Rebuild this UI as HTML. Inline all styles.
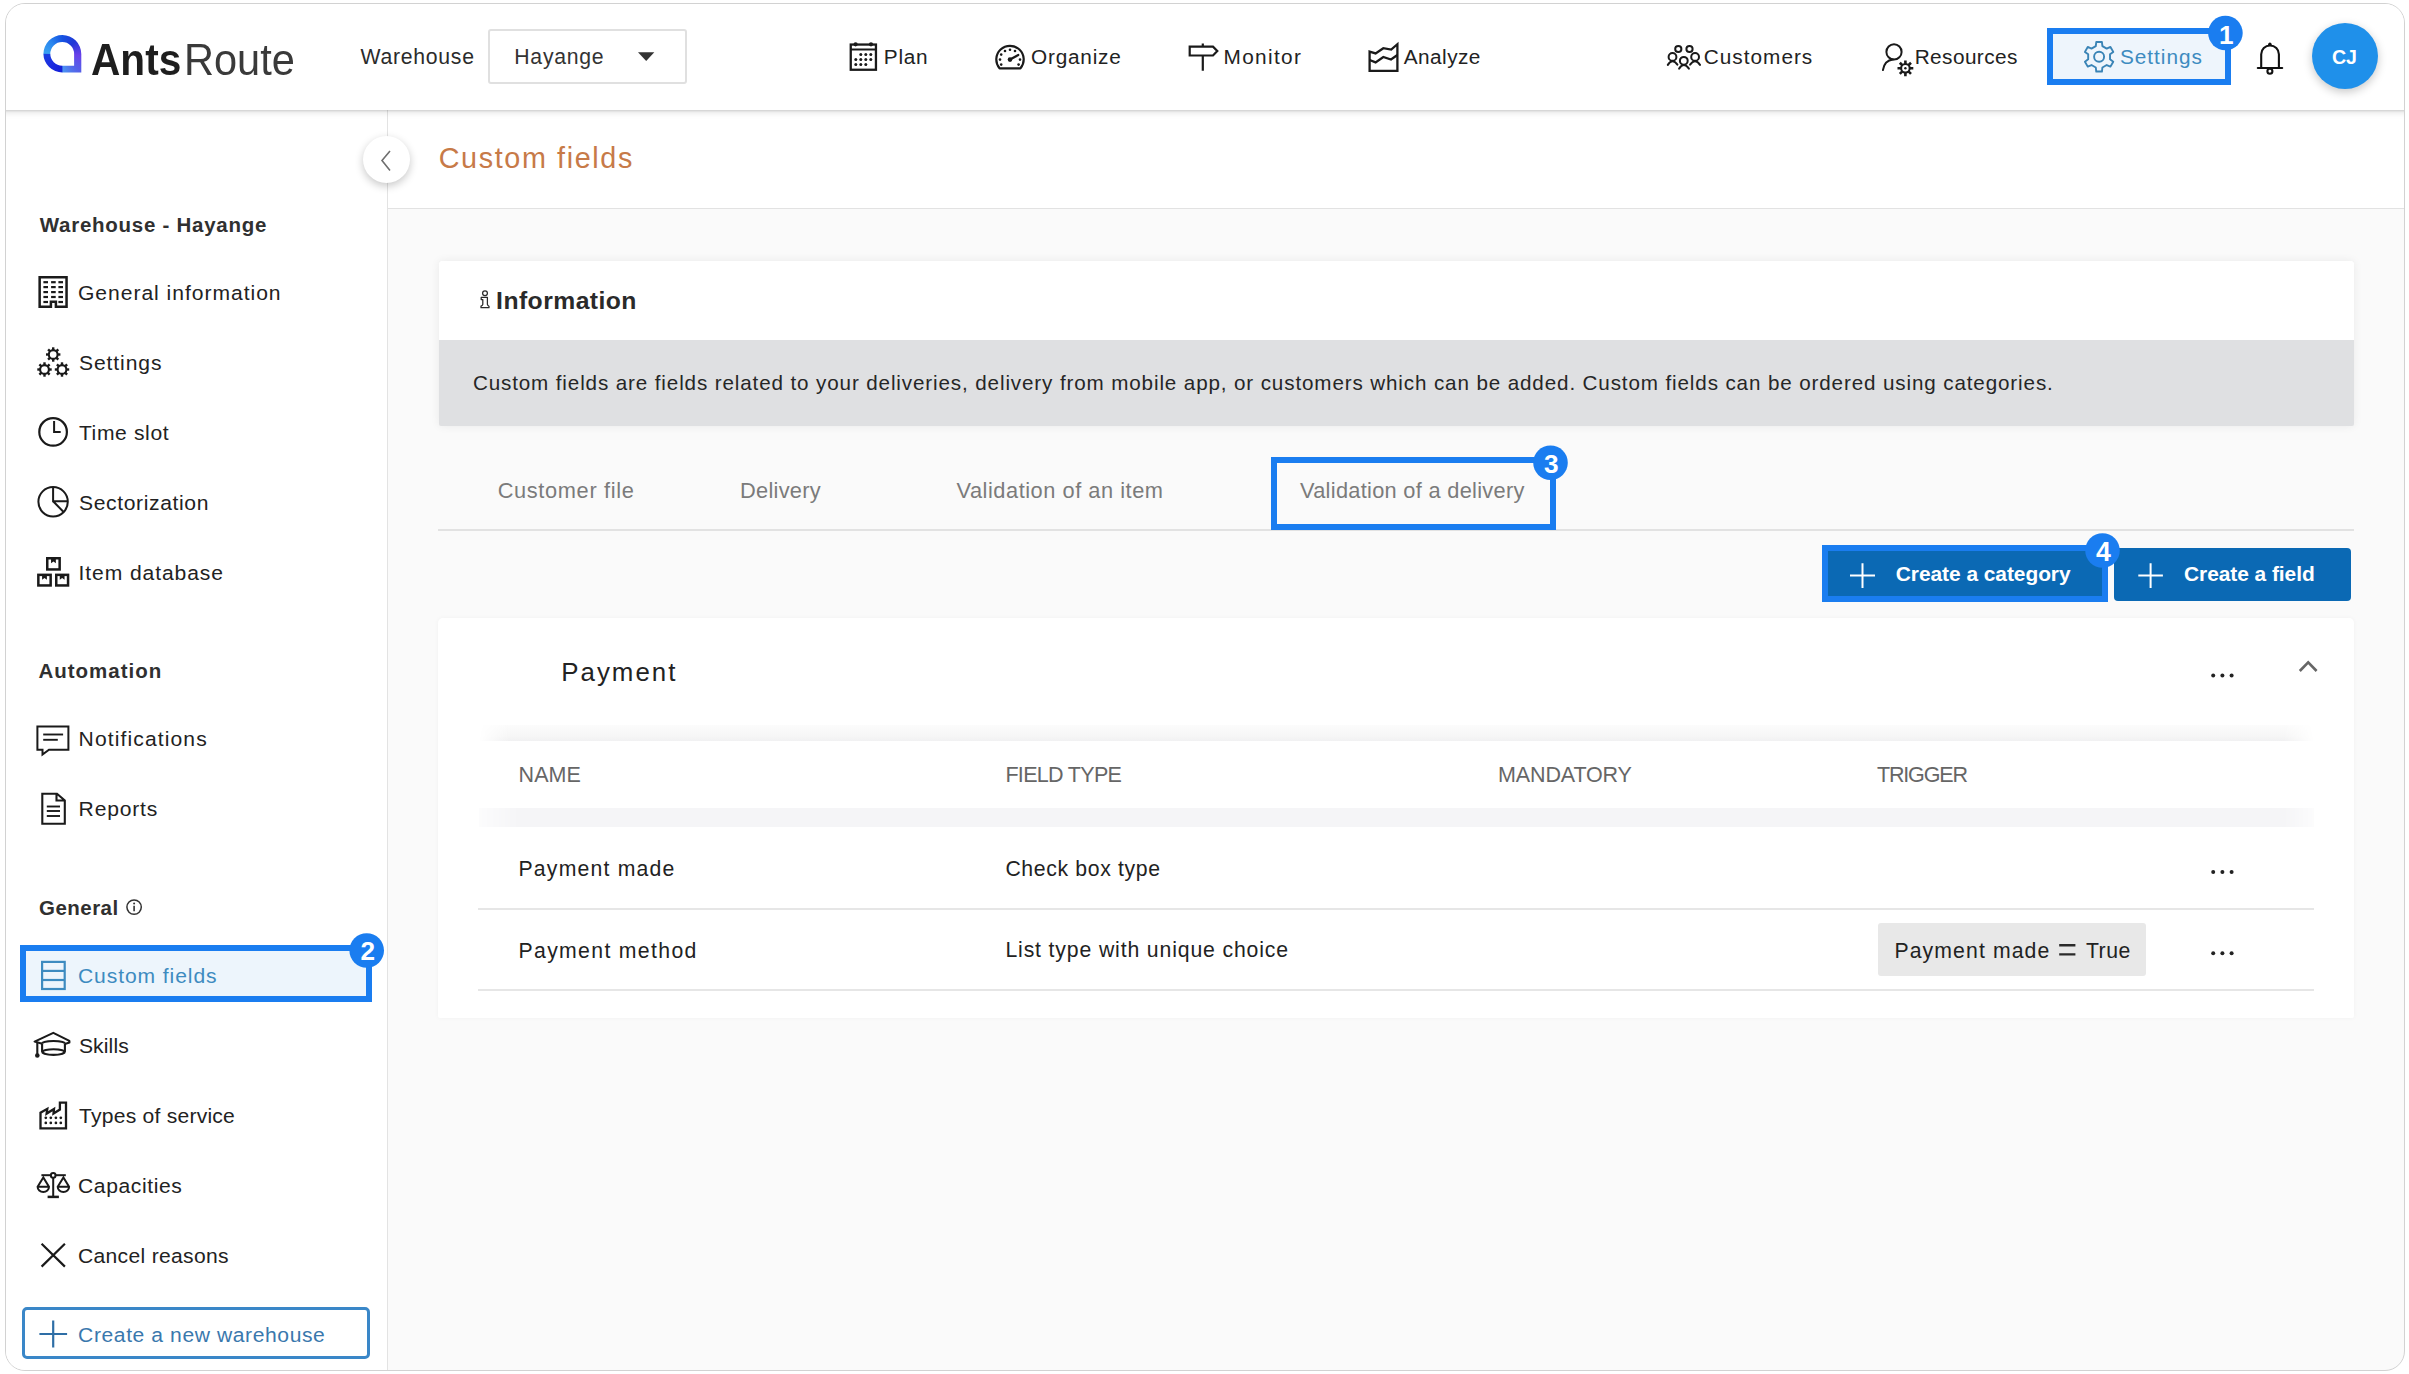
<!DOCTYPE html>
<html><head><meta charset="utf-8"><style>
html,body{margin:0;padding:0;background:#fff;width:2409px;height:1374px;overflow:hidden;font-family:"Liberation Sans",sans-serif;}
#frame{position:absolute;left:5px;top:3px;width:2398px;height:1366px;border:1px solid #d2d2d2;border-radius:20px;overflow:hidden;background:#fafafa;}
#in{position:absolute;left:-6px;top:-4px;width:2409px;height:1374px;}
.a{position:absolute;box-sizing:border-box;}
.t{position:absolute;white-space:nowrap;line-height:1;z-index:6;}
svg{position:absolute;overflow:visible;z-index:5;}

</style></head><body>
<div id="frame"><div id="in">
<!-- sidebar -->
<div class="a" style="left:0;top:110px;width:388px;height:1270px;background:#fff;border-right:1px solid #e3e3e3;"></div>
<!-- title bar -->
<div class="a" style="left:388px;top:110px;width:2030px;height:99px;background:#fff;border-bottom:1px solid #e2e2e2;"></div>
<!-- header -->
<div class="a" style="left:0;top:0;width:2409px;height:110px;background:#fff;box-shadow:0 1px 2px rgba(0,0,0,0.12),0 3px 6px rgba(0,0,0,0.10);z-index:2;"></div>
<!-- collapse button -->
<div class="a" style="left:363px;top:136px;width:47px;height:47px;border-radius:50%;background:#fff;box-shadow:0 3px 8px rgba(0,0,0,0.22);"></div>
<!-- info card -->
<div class="a" style="left:439px;top:261px;width:1915px;height:165px;background:#dfe0e2;box-shadow:0 0 10px rgba(0,0,0,0.07);border-radius:2px;"></div>
<div class="a" style="left:439px;top:261px;width:1915px;height:79px;background:#fff;border-radius:2px 2px 0 0;"></div>
<!-- tabs underline -->
<div class="a" style="left:438px;top:529px;width:1916px;height:2px;background:#e2e2e2;"></div>
<!-- payment card -->
<div class="a" style="left:438px;top:618px;width:1916px;height:400px;background:#fff;border-radius:5px 5px 2px 2px;box-shadow:0 0 5px rgba(0,0,0,0.04);"></div>
<div class="a" style="left:479px;top:725px;width:1835px;height:16px;background:linear-gradient(#fcfcfc,#f6f6f6 70%,#f1f1f2);-webkit-mask-image:linear-gradient(to right,transparent,#000 30px,#000 calc(100% - 30px),transparent);"></div>
<div class="a" style="left:479px;top:808px;width:1835px;height:19px;background:#f5f5f7;-webkit-mask-image:linear-gradient(to right,rgba(0,0,0,.3),#000 40px,#000 calc(100% - 30px),rgba(0,0,0,.3));"></div>
<div class="a" style="left:478px;top:908px;width:1836px;height:2px;background:#e6e6e6;"></div>
<div class="a" style="left:478px;top:989px;width:1836px;height:2px;background:#e6e6e6;"></div>
<!-- chip -->
<div class="a" style="left:1878px;top:923px;width:268px;height:53px;background:#e8e8e8;border-radius:3px;"></div>
<!-- buttons -->
<div class="a" style="left:1822px;top:545px;width:286px;height:57px;background:#0b69b4;border:6px solid #1a7df0;"></div>
<div class="a" style="left:2114px;top:548px;width:237px;height:53px;background:#0b69b4;border-radius:4px;"></div>
<!-- highlight boxes -->
<div class="a" style="left:2047px;top:28px;width:184px;height:57px;background:#eef5fc;border:6px solid #1a7df0;z-index:3;"></div>
<div class="a" style="left:1271px;top:457px;width:285px;height:73px;border:6px solid #1a7df0;"></div>
<div class="a" style="left:20px;top:945px;width:352px;height:57px;background:#edf5fc;border:6px solid #1a7df0;"></div>
<!-- create warehouse btn -->
<div class="a" style="left:22px;top:1307px;width:348px;height:52px;border:3px solid #3a87c8;border-radius:5px;"></div>
<!-- dropdown -->
<div class="a" style="left:488px;top:29px;width:199px;height:55px;border:2px solid #e0e0e0;border-radius:3px;z-index:3;"></div>
<!-- avatar -->
<div class="a" style="left:2312px;top:23px;width:66px;height:66px;border-radius:50%;background:#1f90ea;box-shadow:0 3px 10px rgba(0,0,0,0.22);z-index:3;"></div>
<div class="a" style="left:43px;top:35px;width:39px;height:38px;z-index:5;background:conic-gradient(from 0deg at 19.4px 18.9px,#1552e2 0deg,#2238d6 45deg,#6a40ea 95deg,#5560e8 135deg,#4a94f2 178deg,#1420d8 182deg,#1c2ce0 225deg,#1a3ee0 268deg,#3aa2f2 272deg,#2a86ee 315deg,#1552e2 360deg);clip-path:path(evenodd,'M0.4 18.9 A19 19 0 0 1 19.4 0 A19 19 0 0 1 38.3 18.9 L38.3 37.5 L19.4 37.5 A19 19 0 0 1 0.4 18.9 Z M7.3 18.8 A11.9 11.9 0 0 0 19.2 30.7 L31.1 30.7 L31.1 18.8 A11.9 11.9 0 0 0 19.2 6.9 A11.9 11.9 0 0 0 7.3 18.8 Z');"></div><svg style="left:0;top:0" width="2409" height="1374" viewBox="0 0 2409 1374"><path d="M638 52.3 L654.3 52.3 L646.2 61 Z" fill="#333"/>
<g transform="translate(845 38)" fill="none" stroke="#1a1a1a" stroke-width="2.3"><rect x="5.75" y="6.55" width="25.2" height="25.2"/><line x1="5.75" y1="11.6" x2="30.95" y2="11.6" stroke-width="2"/></g>
<g transform="translate(845 38)" fill="#1a1a1a"><circle cx="10.6" cy="6.3" r="2.1"/><circle cx="26" cy="6.3" r="2.1"/><circle cx="15.8" cy="16.6" r="1.5"/><circle cx="20.8" cy="16.6" r="1.5"/><circle cx="25.8" cy="16.6" r="1.5"/><circle cx="10.8" cy="21.6" r="1.5"/><circle cx="15.8" cy="21.6" r="1.5"/><circle cx="20.8" cy="21.6" r="1.5"/><circle cx="25.8" cy="21.6" r="1.5"/><circle cx="10.8" cy="26.6" r="1.5"/><circle cx="15.8" cy="26.6" r="1.5"/><circle cx="20.8" cy="26.6" r="1.5"/></g>
<g transform="translate(990 40)"><path d="M9.5 28.3 A13.7 13.7 0 1 1 30.5 28.3 Z" fill="none" stroke="#1a1a1a" stroke-width="2.2" stroke-linejoin="round"/><line x1="20" y1="19.5" x2="28.3" y2="15" stroke="#1a1a1a" stroke-width="2.2" stroke-linecap="round"/><circle cx="20" cy="19.6" r="2.3" fill="#1a1a1a"/><circle cx="11.2" cy="14.6" r="1.3" fill="#1a1a1a"/><circle cx="15" cy="11" r="1.3" fill="#1a1a1a"/><circle cx="20" cy="9.7" r="1.3" fill="#1a1a1a"/><circle cx="25" cy="11" r="1.3" fill="#1a1a1a"/><circle cx="10" cy="19.6" r="1.3" fill="#1a1a1a"/><circle cx="11.2" cy="24.6" r="1.3" fill="#1a1a1a"/><circle cx="30" cy="19.6" r="1.3" fill="#1a1a1a"/><circle cx="28.6" cy="24.6" r="1.3" fill="#1a1a1a"/></g>
<path d="M1189.7 46.7 L1213 46.7 L1217.3 51.1 L1213 55.5 L1189.7 55.5 Z" fill="none" stroke="#1a1a1a" stroke-width="2.2"/><line x1="1202.8" y1="43.6" x2="1202.8" y2="46.7" stroke="#1a1a1a" stroke-width="2.2"/><line x1="1202.8" y1="55.5" x2="1202.8" y2="70.8" stroke="#1a1a1a" stroke-width="2.2"/>
<g transform="translate(1362 38)" fill="none" stroke="#1a1a1a" stroke-width="2.3" stroke-linejoin="miter"><path d="M7.6 13.6 L13.6 15.4 L21.3 10.2 L29.2 11.6 L35.4 6.2 L35.4 32.8 L7.6 32.8 Z"/><path d="M7.6 22 L13.6 24.4 L21.3 19 L29 21.5 L35.4 17"/></g>
<g fill="none" stroke="#1a1a1a" stroke-width="2"><circle cx="1678.3" cy="49" r="3.1"/><circle cx="1689.5" cy="49" r="3.1"/><circle cx="1672.5" cy="56.9" r="3.9"/><circle cx="1695.1" cy="56.9" r="3.9"/><circle cx="1683.8" cy="60.8" r="3.9"/><path d="M1667.8 64.9 Q1672.5 57.7 1677.4 64.6" stroke-linecap="round"/><path d="M1679.1 68.6 Q1683.8 61.6 1688.9 68.6" stroke-linecap="round"/><path d="M1690.1 64.6 Q1695.1 57.7 1700 64.9" stroke-linecap="round"/></g>
<g fill="none" stroke="#1a1a1a" stroke-width="2"><circle cx="1894" cy="51.9" r="7.6"/><path d="M1882.9 70.1 Q1884.5 60.5 1893 59.6" stroke-linecap="round"/></g>
<circle cx="1905.4" cy="68.3" r="4.3" fill="none" stroke="#1a1a1a" stroke-width="2.1"/><line x1="1905.40" y1="64.00" x2="1905.40" y2="60.40" stroke="#1a1a1a" stroke-width="2.6"/><line x1="1908.44" y1="65.26" x2="1910.99" y2="62.71" stroke="#1a1a1a" stroke-width="2.6"/><line x1="1909.70" y1="68.30" x2="1913.30" y2="68.30" stroke="#1a1a1a" stroke-width="2.6"/><line x1="1908.44" y1="71.34" x2="1910.99" y2="73.89" stroke="#1a1a1a" stroke-width="2.6"/><line x1="1905.40" y1="72.60" x2="1905.40" y2="76.20" stroke="#1a1a1a" stroke-width="2.6"/><line x1="1902.36" y1="71.34" x2="1899.81" y2="73.89" stroke="#1a1a1a" stroke-width="2.6"/><line x1="1901.10" y1="68.30" x2="1897.50" y2="68.30" stroke="#1a1a1a" stroke-width="2.6"/><line x1="1902.36" y1="65.26" x2="1899.81" y2="62.71" stroke="#1a1a1a" stroke-width="2.6"/>
<circle cx="1905.4" cy="68.3" r="1.2" fill="#1a1a1a"/>
<path d="M2095.79 46.10 L2096.27 42.07 L2101.93 42.07 L2102.41 46.10 L2106.71 48.58 L2110.44 46.98 L2113.27 51.89 L2110.02 54.32 L2110.02 59.28 L2113.27 61.71 L2110.44 66.62 L2106.71 65.02 L2102.41 67.50 L2101.93 71.53 L2096.27 71.53 L2095.79 67.50 L2091.49 65.02 L2087.76 66.62 L2084.93 61.71 L2088.18 59.28 L2088.18 54.32 L2084.93 51.89 L2087.76 46.98 L2091.49 48.58 Z" fill="none" stroke="#3a84b6" stroke-width="1.9" stroke-linejoin="round"/>
<circle cx="2099.1" cy="56.8" r="5" fill="none" stroke="#3a84b6" stroke-width="1.9"/>
<g fill="none" stroke="#111" stroke-width="2.1"><path d="M2261.2 68 L2261.2 54.3 A8.85 8.85 0 0 1 2278.9 54.3 L2278.9 68"/><line x1="2257.8" y1="68" x2="2282.2" y2="68" stroke-linecap="round"/><circle cx="2269.9" cy="71.3" r="2.5"/></g><circle cx="2269.9" cy="44.2" r="1.7" fill="#111"/>
<g transform="translate(33 272)" fill="none" stroke="#1a1a1a" stroke-width="2.5"><path d="M17.9 34.85 L6.65 34.85 L6.65 5.35 L33.55 5.35 L33.55 34.85 L22.9 34.85 L22.9 29.8 L17.9 29.8 Z"/></g>
<g transform="translate(33 272)" fill="#1a1a1a"><rect x="10.40" y="9.10" width="4.6" height="2.2"/><rect x="10.40" y="14.00" width="4.6" height="2.2"/><rect x="10.40" y="19.00" width="4.6" height="2.2"/><rect x="10.40" y="23.90" width="4.6" height="2.2"/><rect x="10.40" y="28.90" width="4.6" height="2.2"/><rect x="18.10" y="9.10" width="4.6" height="2.2"/><rect x="18.10" y="14.00" width="4.6" height="2.2"/><rect x="18.10" y="19.00" width="4.6" height="2.2"/><rect x="18.10" y="23.90" width="4.6" height="2.2"/><rect x="25.40" y="9.10" width="4.6" height="2.2"/><rect x="25.40" y="14.00" width="4.6" height="2.2"/><rect x="25.40" y="19.00" width="4.6" height="2.2"/><rect x="25.40" y="23.90" width="4.6" height="2.2"/><rect x="25.40" y="28.90" width="4.6" height="2.2"/></g>
<circle cx="53.2" cy="354.5" r="4.4" fill="none" stroke="#1a1a1a" stroke-width="2.1"/><line x1="53.20" y1="350.10" x2="53.20" y2="347.30" stroke="#1a1a1a" stroke-width="2.4"/><line x1="56.31" y1="351.39" x2="58.29" y2="349.41" stroke="#1a1a1a" stroke-width="2.4"/><line x1="57.60" y1="354.50" x2="60.40" y2="354.50" stroke="#1a1a1a" stroke-width="2.4"/><line x1="56.31" y1="357.61" x2="58.29" y2="359.59" stroke="#1a1a1a" stroke-width="2.4"/><line x1="53.20" y1="358.90" x2="53.20" y2="361.70" stroke="#1a1a1a" stroke-width="2.4"/><line x1="50.09" y1="357.61" x2="48.11" y2="359.59" stroke="#1a1a1a" stroke-width="2.4"/><line x1="48.80" y1="354.50" x2="46.00" y2="354.50" stroke="#1a1a1a" stroke-width="2.4"/><line x1="50.09" y1="351.39" x2="48.11" y2="349.41" stroke="#1a1a1a" stroke-width="2.4"/>
<circle cx="44.5" cy="369.5" r="4.4" fill="none" stroke="#1a1a1a" stroke-width="2.1"/><line x1="44.50" y1="365.10" x2="44.50" y2="362.30" stroke="#1a1a1a" stroke-width="2.4"/><line x1="47.61" y1="366.39" x2="49.59" y2="364.41" stroke="#1a1a1a" stroke-width="2.4"/><line x1="48.90" y1="369.50" x2="51.70" y2="369.50" stroke="#1a1a1a" stroke-width="2.4"/><line x1="47.61" y1="372.61" x2="49.59" y2="374.59" stroke="#1a1a1a" stroke-width="2.4"/><line x1="44.50" y1="373.90" x2="44.50" y2="376.70" stroke="#1a1a1a" stroke-width="2.4"/><line x1="41.39" y1="372.61" x2="39.41" y2="374.59" stroke="#1a1a1a" stroke-width="2.4"/><line x1="40.10" y1="369.50" x2="37.30" y2="369.50" stroke="#1a1a1a" stroke-width="2.4"/><line x1="41.39" y1="366.39" x2="39.41" y2="364.41" stroke="#1a1a1a" stroke-width="2.4"/>
<circle cx="62" cy="369.5" r="4.4" fill="none" stroke="#1a1a1a" stroke-width="2.1"/><line x1="62.00" y1="365.10" x2="62.00" y2="362.30" stroke="#1a1a1a" stroke-width="2.4"/><line x1="65.11" y1="366.39" x2="67.09" y2="364.41" stroke="#1a1a1a" stroke-width="2.4"/><line x1="66.40" y1="369.50" x2="69.20" y2="369.50" stroke="#1a1a1a" stroke-width="2.4"/><line x1="65.11" y1="372.61" x2="67.09" y2="374.59" stroke="#1a1a1a" stroke-width="2.4"/><line x1="62.00" y1="373.90" x2="62.00" y2="376.70" stroke="#1a1a1a" stroke-width="2.4"/><line x1="58.89" y1="372.61" x2="56.91" y2="374.59" stroke="#1a1a1a" stroke-width="2.4"/><line x1="57.60" y1="369.50" x2="54.80" y2="369.50" stroke="#1a1a1a" stroke-width="2.4"/><line x1="58.89" y1="366.39" x2="56.91" y2="364.41" stroke="#1a1a1a" stroke-width="2.4"/>
<g fill="none" stroke="#1a1a1a" stroke-width="2"><circle cx="53.1" cy="431.9" r="13.8" stroke-width="2.2"/><path d="M54.1 421 L54.1 431.9 L60.7 431.9"/></g>
<g fill="none" stroke="#1a1a1a" stroke-width="2"><circle cx="53.1" cy="501.8" r="14.7"/><path d="M53.1 487.1 L53.1 501.2 L67.8 501.2 M53.1 501.2 L63.6 512"/></g>
<g transform="translate(33 552)"><rect x="14.25" y="6.25" width="12.40" height="11.20" fill="none" stroke="#1a1a1a" stroke-width="2.5"/><path d="M18.05 6.25 L18.05 11.25 L20.45 9.45 L22.85 11.25 L22.85 6.25 Z" fill="#1a1a1a"/><rect x="5.35" y="22.85" width="12.30" height="10.60" fill="none" stroke="#1a1a1a" stroke-width="2.5"/><path d="M9.10 22.85 L9.10 27.85 L11.50 26.05 L13.90 27.85 L13.90 22.85 Z" fill="#1a1a1a"/><rect x="23.25" y="22.85" width="11.80" height="10.60" fill="none" stroke="#1a1a1a" stroke-width="2.5"/><path d="M26.75 22.85 L26.75 27.85 L29.15 26.05 L31.55 27.85 L31.55 22.85 Z" fill="#1a1a1a"/></g>
<g fill="none" stroke="#1a1a1a" stroke-width="2"><path d="M42.5 749.7 L37.4 749.7 L37.4 726.4 L68.4 726.4 L68.4 749.7 L49 749.7 L42.5 754.5 Z" stroke-linejoin="miter"/><line x1="43.2" y1="734.5" x2="63.1" y2="734.5" stroke-width="1.9"/><line x1="43.2" y1="739.8" x2="57.8" y2="739.8" stroke-width="1.9"/></g>
<g fill="none" stroke="#1a1a1a" stroke-width="2.1"><path d="M42.3 793.7 L57 793.7 L64.8 800.5 L64.8 823.7 L42.3 823.7 Z M56.5 793.7 L56.5 800.5 L64.8 800.5"/><line x1="46.8" y1="806.5" x2="60" y2="806.5" stroke-width="1.9"/><line x1="46.8" y1="811" x2="60" y2="811" stroke-width="1.9"/><line x1="46.8" y1="816" x2="60" y2="816" stroke-width="1.9"/></g>
<circle cx="134.1" cy="907.1" r="7.2" fill="none" stroke="#333" stroke-width="1.5"/><circle cx="134.1" cy="903.6" r="1" fill="#333"/><line x1="134.1" y1="905.8" x2="134.1" y2="911.2" stroke="#333" stroke-width="1.6"/>
<g fill="none" stroke="#3d8bc0" stroke-width="2.2"><rect x="42.1" y="961.9" width="22.6" height="27.1"/><line x1="42.1" y1="970.9" x2="64.7" y2="970.9"/><line x1="42.1" y1="980" x2="64.7" y2="980"/></g>
<g transform="translate(30 1025)" fill="none" stroke="#1a1a1a" stroke-width="2.1"><path d="M12.1 18.7 L4.6 16.6 L23.3 7.9 L39.4 15.9 L39.4 17.4 L34.9 18.9" stroke-linejoin="round"/><path d="M12.1 18.7 A11.4 2.7 0 0 1 34.9 18.7"/><path d="M12.1 18.7 L12.1 26.6 A11.4 3.3 0 0 0 34.9 26.6 L34.9 18.7"/><path d="M12.6 26.9 A10.9 2.7 0 0 1 34.4 26.9"/><line x1="7.3" y1="17.2" x2="7.3" y2="29.5"/></g><circle cx="37.3" cy="1055.5" r="2.3" fill="#1a1a1a"/>
<g transform="translate(33 1097)"><path d="M7.5 31.4 L7.5 15.7 L14.3 11.8 L13.6 16.6 L21 12 L20.5 16.6 L26.9 12.6 L26.9 5.6 L33 5.6 L33 31.4 Z" fill="none" stroke="#1a1a1a" stroke-width="2.3" stroke-linejoin="miter"/><circle cx="12.8" cy="20.8" r="1.35" fill="#1a1a1a"/><circle cx="12.8" cy="25.9" r="1.35" fill="#1a1a1a"/><circle cx="17.8" cy="20.8" r="1.35" fill="#1a1a1a"/><circle cx="17.8" cy="25.9" r="1.35" fill="#1a1a1a"/><circle cx="22.9" cy="20.8" r="1.35" fill="#1a1a1a"/><circle cx="22.9" cy="25.9" r="1.35" fill="#1a1a1a"/><circle cx="27.8" cy="20.8" r="1.35" fill="#1a1a1a"/><circle cx="27.8" cy="25.9" r="1.35" fill="#1a1a1a"/></g>
<g transform="translate(33 1165)" fill="none" stroke="#1a1a1a" stroke-width="2"><line x1="8.4" y1="10.2" x2="17.9" y2="10.2"/><line x1="22.5" y1="10.2" x2="32.8" y2="10.2"/><circle cx="20.2" cy="10.4" r="2.3"/><line x1="20.2" y1="12.7" x2="20.2" y2="31.9"/><line x1="14.6" y1="31.9" x2="25.9" y2="31.9" stroke-width="2.5"/><path d="M10.3 12.5 L4.6 21.8 A5.7 5.3 0 0 0 16 21.8 Z M4.6 21.8 L16 21.8"/><path d="M30.4 12.5 L24.7 21.8 A5.7 5.3 0 0 0 36.1 21.8 Z M24.7 21.8 L36.1 21.8"/></g>
<path d="M41.6 1243.8 L64.9 1266.6 M64.9 1243.8 L41.6 1266.6" stroke="#1a1a1a" stroke-width="2.2"/>
<path d="M39.4 1334 L67.1 1334 M53.2 1320.5 L53.2 1347.4" stroke="#2e6ea6" stroke-width="2.2"/>
<path d="M390 151 L382 160.6 L390 170.6" fill="none" stroke="#6f6f6f" stroke-width="1.6"/>
<g fill="#fff" stroke="#2a2a2a" stroke-width="1.25" stroke-linejoin="round"><circle cx="485" cy="293.2" r="2.4"/><path d="M481.2 297.4 L487.4 297.4 L487.4 304.4 Q487.6 305.6 489 306.2 L489 307.7 L481 307.7 L481 306.2 Q482.6 305.6 482.8 304.4 L482.8 299.6 L481.2 299.6 Z"/></g>
<path d="M1850 575.6 L1875 575.6 M1862.5 563.3 L1862.5 587.9" stroke="#fff" stroke-width="2"/>
<path d="M2138.3 575.6 L2162.9 575.6 M2150.6 563.3 L2150.6 587.9" stroke="#fff" stroke-width="2"/>
<circle cx="2213.2" cy="675.4" r="2" fill="#222"/>
<circle cx="2222.4" cy="675.4" r="2" fill="#222"/>
<circle cx="2231.6" cy="675.4" r="2" fill="#222"/>
<circle cx="2213.2" cy="872" r="2" fill="#222"/>
<circle cx="2222.4" cy="872" r="2" fill="#222"/>
<circle cx="2231.6" cy="872" r="2" fill="#222"/>
<circle cx="2213.2" cy="953.2" r="2" fill="#222"/>
<circle cx="2222.4" cy="953.2" r="2" fill="#222"/>
<circle cx="2231.6" cy="953.2" r="2" fill="#222"/>
<path d="M2299.8 671 L2308.2 662.4 L2316.6 671" fill="none" stroke="#666" stroke-width="2.6"/>
<path d="M2059.2 945.3 L2075.4 945.3 M2059.2 954.4 L2075.4 954.4" stroke="#2a2a2a" stroke-width="2.4"/>
<circle cx="2225.4" cy="33" r="17.3" fill="#1a7df0"/>
<circle cx="366.7" cy="950.5" r="17.3" fill="#1a7df0"/>
<circle cx="1550.5" cy="462.7" r="17.3" fill="#1a7df0"/>
<circle cx="2102.5" cy="550.5" r="17.3" fill="#1a7df0"/></svg>
<div class="t" style="left:91.4px;top:36.5px;font-size:45.06px;letter-spacing:0.00px;font-weight:700;color:#1e1e1e;transform:scaleX(0.9016);transform-origin:0 0;">Ants</div>
<div class="t" style="left:183.5px;top:36.5px;font-size:45.06px;letter-spacing:0.00px;font-weight:400;color:#3a3a3a;transform:scaleX(0.9221);transform-origin:0 0;">Route</div>
<div class="t" style="left:2219.0px;top:21.8px;font-size:26.16px;letter-spacing:0.00px;font-weight:700;color:#fff;">1</div>
<div class="t" style="left:360.5px;top:938.4px;font-size:26.16px;letter-spacing:0.00px;font-weight:700;color:#fff;">2</div>
<div class="t" style="left:1543.9px;top:450.9px;font-size:26.16px;letter-spacing:0.00px;font-weight:700;color:#fff;">3</div>
<div class="t" style="left:2095.9px;top:538.6px;font-size:26.74px;letter-spacing:0.00px;font-weight:700;color:#fff;">4</div>
<div class="t" style="left:360.5px;top:45.9px;font-size:21.22px;letter-spacing:0.72px;font-weight:400;color:#2b2b2b;">Warehouse</div>
<div class="t" style="left:514.3px;top:45.9px;font-size:21.22px;letter-spacing:0.73px;font-weight:400;color:#333;">Hayange</div>
<div class="t" style="left:883.8px;top:47.1px;font-size:20.79px;letter-spacing:0.75px;font-weight:400;color:#222;">Plan</div>
<div class="t" style="left:1031.0px;top:47.1px;font-size:20.79px;letter-spacing:0.79px;font-weight:400;color:#222;">Organize</div>
<div class="t" style="left:1223.5px;top:47.1px;font-size:20.79px;letter-spacing:1.34px;font-weight:400;color:#222;">Monitor</div>
<div class="t" style="left:1403.8px;top:47.1px;font-size:20.79px;letter-spacing:0.45px;font-weight:400;color:#222;">Analyze</div>
<div class="t" style="left:1703.8px;top:47.1px;font-size:20.79px;letter-spacing:1.00px;font-weight:400;color:#222;">Customers</div>
<div class="t" style="left:1914.7px;top:47.1px;font-size:20.79px;letter-spacing:0.42px;font-weight:400;color:#222;">Resources</div>
<div class="t" style="left:2120.0px;top:46.6px;font-size:20.79px;letter-spacing:0.96px;font-weight:400;color:#3d8bc0;">Settings</div>
<div class="t" style="left:2332.0px;top:48.3px;font-size:19.62px;letter-spacing:-0.16px;font-weight:700;color:#fff;">CJ</div>
<div class="t" style="left:438.7px;top:144.3px;font-size:28.78px;letter-spacing:1.61px;font-weight:400;color:#c77a48;">Custom fields</div>
<div class="t" style="left:39.7px;top:214.6px;font-size:20.49px;letter-spacing:0.75px;font-weight:700;color:#303030;">Warehouse - Hayange</div>
<div class="t" style="left:78.0px;top:282.0px;font-size:21.08px;letter-spacing:0.97px;font-weight:400;color:#222;">General information</div>
<div class="t" style="left:79.0px;top:351.8px;font-size:21.08px;letter-spacing:0.90px;font-weight:400;color:#222;">Settings</div>
<div class="t" style="left:78.9px;top:422.2px;font-size:21.08px;letter-spacing:0.63px;font-weight:400;color:#222;">Time slot</div>
<div class="t" style="left:79.0px;top:491.6px;font-size:21.08px;letter-spacing:0.63px;font-weight:400;color:#222;">Sectorization</div>
<div class="t" style="left:78.6px;top:562.0px;font-size:21.08px;letter-spacing:0.90px;font-weight:400;color:#222;">Item database</div>
<div class="t" style="left:38.4px;top:661.3px;font-size:20.49px;letter-spacing:1.00px;font-weight:700;color:#303030;">Automation</div>
<div class="t" style="left:78.6px;top:728.4px;font-size:21.08px;letter-spacing:1.11px;font-weight:400;color:#222;">Notifications</div>
<div class="t" style="left:78.6px;top:798.2px;font-size:21.08px;letter-spacing:0.81px;font-weight:400;color:#222;">Reports</div>
<div class="t" style="left:39.0px;top:897.7px;font-size:20.49px;letter-spacing:0.48px;font-weight:700;color:#303030;">General</div>
<div class="t" style="left:77.9px;top:964.8px;font-size:21.08px;letter-spacing:0.92px;font-weight:400;color:#3d8bc0;">Custom fields</div>
<div class="t" style="left:78.9px;top:1035.0px;font-size:21.08px;letter-spacing:0.15px;font-weight:400;color:#222;">Skills</div>
<div class="t" style="left:79.1px;top:1105.0px;font-size:21.08px;letter-spacing:0.23px;font-weight:400;color:#222;">Types of service</div>
<div class="t" style="left:78.0px;top:1174.7px;font-size:21.08px;letter-spacing:0.61px;font-weight:400;color:#222;">Capacities</div>
<div class="t" style="left:78.0px;top:1244.6px;font-size:21.08px;letter-spacing:0.31px;font-weight:400;color:#222;">Cancel reasons</div>
<div class="t" style="left:78.1px;top:1323.6px;font-size:21.08px;letter-spacing:0.59px;font-weight:400;color:#3a78ad;">Create a new warehouse</div>
<div class="t" style="left:496.1px;top:289.2px;font-size:24.71px;letter-spacing:0.45px;font-weight:700;color:#2a2a2a;">Information</div>
<div class="t" style="left:472.9px;top:372.8px;font-size:20.64px;letter-spacing:0.87px;font-weight:400;color:#262626;">Custom fields are fields related to your deliveries, delivery from mobile app, or customers which can be added. Custom fields can be ordered using categories.</div>
<div class="t" style="left:497.7px;top:479.6px;font-size:21.8px;letter-spacing:0.64px;font-weight:400;color:#7b7b7b;">Customer file</div>
<div class="t" style="left:740.0px;top:479.6px;font-size:21.8px;letter-spacing:0.28px;font-weight:400;color:#7b7b7b;">Delivery</div>
<div class="t" style="left:956.5px;top:479.6px;font-size:21.8px;letter-spacing:0.53px;font-weight:400;color:#7b7b7b;">Validation of an item</div>
<div class="t" style="left:1300.0px;top:479.6px;font-size:21.8px;letter-spacing:0.29px;font-weight:400;color:#7b7b7b;">Validation of a delivery</div>
<div class="t" style="left:1895.8px;top:564.4px;font-size:20.93px;letter-spacing:-0.05px;font-weight:700;color:#fff;">Create a category</div>
<div class="t" style="left:2184.0px;top:564.4px;font-size:20.93px;letter-spacing:-0.05px;font-weight:700;color:#fff;">Create a field</div>
<div class="t" style="left:561.2px;top:659.8px;font-size:25.87px;letter-spacing:2.04px;font-weight:400;color:#222;">Payment</div>
<div class="t" style="left:518.5px;top:764.8px;font-size:21.51px;letter-spacing:0.11px;font-weight:400;color:#666;">NAME</div>
<div class="t" style="left:1005.4px;top:765.2px;font-size:21.51px;letter-spacing:-0.68px;font-weight:400;color:#666;">FIELD TYPE</div>
<div class="t" style="left:1498.0px;top:765.2px;font-size:21.51px;letter-spacing:-0.13px;font-weight:400;color:#666;">MANDATORY</div>
<div class="t" style="left:1877.0px;top:765.2px;font-size:21.51px;letter-spacing:-1.17px;font-weight:400;color:#666;">TRIGGER</div>
<div class="t" style="left:518.5px;top:858.1px;font-size:21.22px;letter-spacing:1.19px;font-weight:400;color:#222;">Payment made</div>
<div class="t" style="left:1005.4px;top:858.4px;font-size:21.22px;letter-spacing:0.65px;font-weight:400;color:#222;">Check box type</div>
<div class="t" style="left:518.5px;top:939.5px;font-size:21.22px;letter-spacing:1.34px;font-weight:400;color:#222;">Payment method</div>
<div class="t" style="left:1005.4px;top:939.2px;font-size:21.22px;letter-spacing:0.86px;font-weight:400;color:#222;">List type with unique choice</div>
<div class="t" style="left:1894.4px;top:940.0px;font-size:21.22px;letter-spacing:1.11px;font-weight:400;color:#222;">Payment made</div>
<div class="t" style="left:2086.0px;top:940.0px;font-size:21.22px;letter-spacing:0.45px;font-weight:400;color:#222;">True</div>
</div></div>
</body></html>
